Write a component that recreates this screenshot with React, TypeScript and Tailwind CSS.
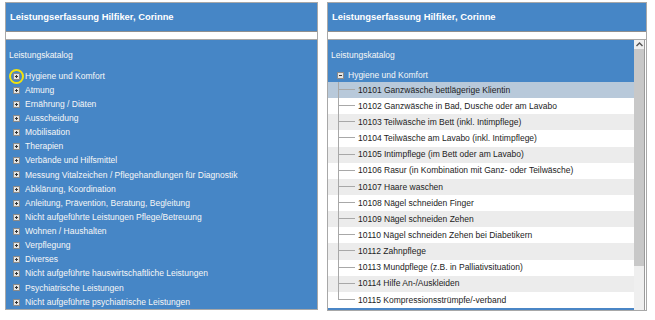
const categories = [
  "Hygiene und Komfort",
  "Atmung",
  "Ernährung / Diäten",
  "Ausscheidung",
  "Mobilisation",
  "Therapien",
  "Verbände und Hilfsmittel",
  "Messung Vitalzeichen / Pflegehandlungen für Diagnostik",
  "Abklärung, Koordination",
  "Anleitung, Prävention, Beratung, Begleitung",
  "Nicht aufgeführte Leistungen Pflege/Betreuung",
  "Wohnen / Haushalten",
  "Verpflegung",
  "Diverses",
  "Nicht aufgeführte hauswirtschaftliche Leistungen",
  "Psychiatrische Leistungen",
  "Nicht aufgeführte psychiatrische Leistungen",
];

const services = [
  "10101 Ganzwäsche bettlägerige Klientin",
  "10102 Ganzwäsche in Bad, Dusche oder am Lavabo",
  "10103 Teilwäsche im Bett (inkl. Intimpflege)",
  "10104 Teilwäsche am Lavabo (inkl. Intimpflege)",
  "10105 Intimpflege (im Bett oder am Lavabo)",
  "10106 Rasur (in Kombination mit Ganz- oder Teilwäsche)",
  "10107 Haare waschen",
  "10108 Nägel schneiden Finger",
  "10109 Nägel schneiden Zehen",
  "10110 Nägel schneiden Zehen bei Diabetikern",
  "10112 Zahnpflege",
  "10113 Mundpflege (z.B. in Palliativsituation)",
  "10114 Hilfe An-/Auskleiden",
  "10115 Kompressionsstrümpfe/-verband",
];

const font = {
  fontFamily: '"Liberation Sans", Arial, sans-serif',
};

export default function App() {
  return (
    <div className="flex h-[320px] w-[655px] gap-[9px] bg-white pl-[5px] pt-[2px]" style={font}>
      <CatalogPanel />
      <ServicePanel />
    </div>
  );
}

function ExpandIcon({ open }: { open?: boolean }) {
  return (
    <svg width="7" height="7" viewBox="0 0 7 7" className="shrink-0">
      <rect x="0.5" y="0.5" width="6" height="6" fill="#e4e4e4" stroke="#8a8a8a" />
      <line x1="2" y1="3.5" x2="5" y2="3.5" stroke="#333" />
      {!open && <line x1="3.5" y1="2" x2="3.5" y2="5" stroke="#333" />}
    </svg>
  );
}

function PanelHeader() {
  return (
    <div className="flex h-[29px] items-center border-b border-[#8f8f8f] bg-[#4686c6] pl-[4px] pt-[1px] text-[9.4px] font-bold text-white">
      Leistungserfassung Hilfiker, Corinne
    </div>
  );
}

function CatalogPanel() {
  return (
    <div className="flex h-[308px] w-[313px] flex-col border border-[#a8a8a8]">
      <PanelHeader />
      <div className="h-[8px] border-b border-[#a8a8a8] bg-white" />
      <div className="flex-1 overflow-hidden bg-[#4686c6] pl-[3px] pt-[8px] text-[8.5px] text-[#f6f6f6]">
        <div className="flex h-[14px] items-center">Leistungskatalog</div>
        <div className="mt-[7px]">
          {categories.map((c, i) => (
            <div key={c} className="flex h-[14.13px] items-center gap-[5px] pl-[4px]">
              <span className="relative flex">
                <ExpandIcon />
                {i === 0 && (
                  <span className="absolute left-[-4px] top-[-4px] h-[15px] w-[15px] rounded-full border-2 border-[#f2e20c]" />
                )}
              </span>
              <span>{c}</span>
            </div>
          ))}
        </div>
      </div>
    </div>
  );
}

function ServicePanel() {
  return (
    <div className="flex h-[309px] w-[320px] flex-col border border-[#a8a8a8]">
      <PanelHeader />
      <div className="h-[8px] border-b border-[#a8a8a8] bg-white" />
      <div className="flex flex-1 overflow-hidden">
        <div className="flex-1 overflow-hidden bg-white text-[8.5px]">
          <div className="bg-[#4686c6] pt-[8px] text-[#f6f6f6]">
            <div className="flex h-[14px] items-center pl-[3px]">Leistungskatalog</div>
            <div className="mt-[6px] flex h-[14px] items-center gap-[4px] pl-[9px]">
              <ExpandIcon open />
              <span>Hygiene und Komfort</span>
            </div>
          </div>
          <div className="border-b-2 border-[#4a86c6]">
            {services.map((s, i) => (
              <ServiceRow key={s} label={s} index={i} last={i === services.length - 1} />
            ))}
          </div>
        </div>
        <Scrollbar />
      </div>
    </div>
  );
}

function ServiceRow({ label, index, last }: { label: string; index: number; last: boolean }) {
  const bg = index === 0 ? "bg-[#b8c9da]" : index % 2 === 0 ? "bg-[#ececec]" : "bg-white";
  return (
    <div className={`flex h-[16.15px] items-stretch pl-[10px] text-[#1c1c1c] ${bg}`}>
      <div className="flex w-[17px] shrink-0 flex-col">
        <div className="h-1/2 border-b border-l border-[#a8a8a8]" />
        <div className={`h-1/2 ${last ? "" : "border-l border-[#a8a8a8]"}`} />
      </div>
      <span className="ml-[3px] flex items-center whitespace-nowrap">{label}</span>
    </div>
  );
}

function Scrollbar() {
  return (
    <div className="flex w-[12px] shrink-0 bg-white">
      <div className="flex w-[11px] flex-col border-r border-[#9a9a9a] bg-[#efefef]">
        <div className="flex h-[9px] items-center justify-center">
          <svg width="7" height="5" viewBox="0 0 7 5">
            <path d="M0.5 4 L3.5 1 L6.5 4" fill="none" stroke="#555" strokeWidth="1.4" />
          </svg>
        </div>
        <div className="h-[217px] bg-[#c8c8c8]" />
      </div>
    </div>
  );
}
